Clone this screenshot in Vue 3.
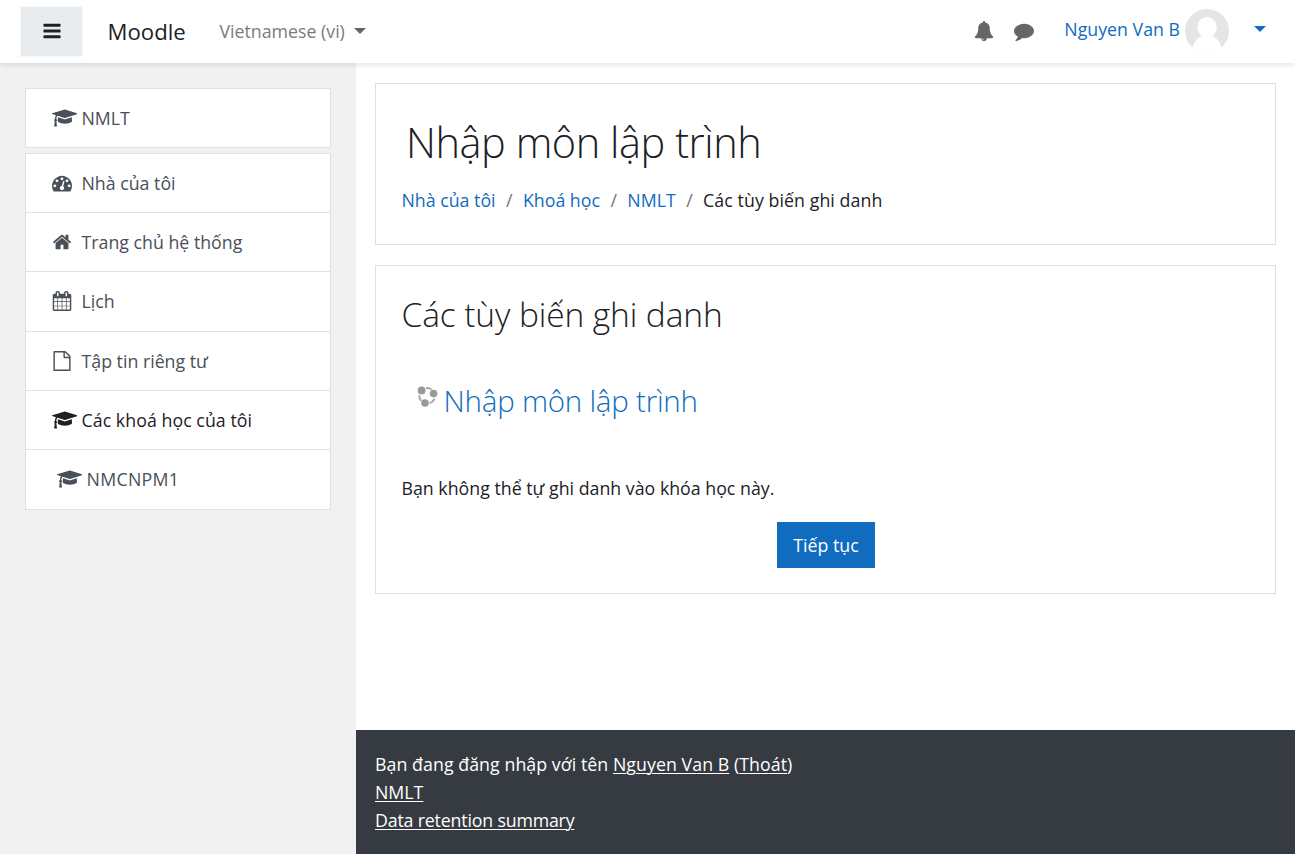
<script setup>
const icons = {
  cap: { w: 2304, d: 'M1774 836l18 316q4 69-82 128t-235 93.5-323 34.5-323-34.5-235-93.5-82-128l18-316 574 181q22 7 48 7t48-7zm530-324q0 23-22 31l-1120 352q-4 1-10 1t-10-1l-652-206q-43 34-71 111.5t-34 178.5q63 36 63 109 0 69-58 107l58 433q2 14-8 25-9 11-24 11h-192q-15 0-24-11-10-11-8-25l58-433q-58-38-58-107 0-73 65-111 11-207 98-330l-333-104q-22-8-22-31t22-31l1120-352q4-1 10-1t10 1l1120 352q22 8 22 31z' },
  dash: { w: 1792, d: 'M384 1152q0-53-37.5-90.5t-90.5-37.5-90.5 37.5-37.5 90.5 37.5 90.5 90.5 37.5 90.5-37.5 37.5-90.5zm192-448q0-53-37.5-90.5t-90.5-37.5-90.5 37.5-37.5 90.5 37.5 90.5 90.5 37.5 90.5-37.5 37.5-90.5zm428 481l101-382q6-26-7.5-48.5t-38.5-29.5-48 6.5-30 39.5l-101 382q-60 5-107 43.5t-63 98.5q-20 77 20 146t117 89 146-20 89-117q16-60-6-117t-72-91zm660-33q0-53-37.5-90.5t-90.5-37.5-90.5 37.5-37.5 90.5 37.5 90.5 90.5 37.5 90.5-37.5 37.5-90.5zm-640-640q0-53-37.5-90.5t-90.5-37.5-90.5 37.5-37.5 90.5 37.5 90.5 90.5 37.5 90.5-37.5 37.5-90.5zm448 192q0-53-37.5-90.5t-90.5-37.5-90.5 37.5-37.5 90.5 37.5 90.5 90.5 37.5 90.5-37.5 37.5-90.5zm320 448q0 261-141 483-19 29-54 29h-1402q-35 0-54-29-141-221-141-483 0-182 71-348t191-286 286-191 348-71 348 71 286 191 191 286 71 348z' },
  home: { w: 1792, d: 'M1472 992v480q0 26-19 45t-45 19h-384v-384h-256v384h-384q-26 0-45-19t-19-45v-480q0-1 .5-3t.5-3l575-474 575 474q1 2 1 6zm223-69l-62 74q-8 9-21 11h-3q-13 0-21-7l-692-577-692 577q-12 8-24 7-13-2-21-11l-62-74q-8-10-7-23.5t11-21.5l719-599q32-26 76-26t76 26l244 204v-195q0-14 9-23t23-9h192q14 0 23 9t9 23v408l219 182q10 8 11 21.5t-7 23.5z' },
  cal: { w: 1792, d: 'M192 1664h288v-288h-288v288zm352 0h320v-288h-320v288zm-352-352h288v-320h-288v320zm352 0h320v-320h-320v320zm-352-384h288v-288h-288v288zm736 736h320v-288h-320v288zm-384-736h320v-288h-320v288zm768 736h288v-288h-288v288zm-384-352h320v-320h-320v320zm-352-864v-288q0-13-9.5-22.5t-22.5-9.5h-64q-13 0-22.5 9.5t-9.5 22.5v288q0 13 9.5 22.5t22.5 9.5h64q13 0 22.5-9.5t9.5-22.5zm736 864h288v-320h-288v320zm-384-384h320v-288h-320v288zm384 0h288v-288h-288v288zm32-480v-288q0-13-9.5-22.5t-22.5-9.5h-64q-13 0-22.5 9.5t-9.5 22.5v288q0 13 9.5 22.5t22.5 9.5h64q13 0 22.5-9.5t9.5-22.5zm384-64v1280q0 52-38 90t-90 38h-1408q-52 0-90-38t-38-90v-1280q0-52 38-90t90-38h128v-96q0-66 47-113t113-47h64q66 0 113 47t47 113v96h384v-96q0-66 47-113t113-47h64q66 0 113 47t47 113v96h128q52 0 90 38t38 90z' },
  file: { w: 1792, d: 'M1596 380q28 28 48 76t20 88v1152q0 40-28 68t-68 28h-1344q-40 0-68-28t-28-68v-1600q0-40 28-68t68-28h896q40 0 88 20t76 48zm-444-244v376h376q-10-29-22-41l-313-313q-12-12-41-22zm384 1528v-1024h-416q-40 0-68-28t-28-68v-416h-768v1536h1280z' }
}
const nav = [
  { icon: 'dash', text: 'Nhà của tôi' },
  { icon: 'home', text: 'Trang chủ hệ thống' },
  { icon: 'cal', text: 'Lịch' },
  { icon: 'file', text: 'Tập tin riêng tư' },
  { icon: 'cap', text: 'Các khoá học của tôi', active: true },
  { icon: 'cap', text: 'NMCNPM1', child: true }
]
const crumbs = ['Nhà của tôi', 'Khoá học', 'NMLT']
</script>

<template>
  <div class="page">
    <header class="navbar">
      <button class="toggle" aria-label="Menu">
        <svg width="20" height="20" viewBox="0 0 1792 1792"><path d="M1664 1344v128q0 26-19 45t-45 19h-1408q-26 0-45-19t-19-45v-128q0-26 19-45t45-19h1408q26 0 45 19t19 45zm0-512v128q0 26-19 45t-45 19h-1408q-26 0-45-19t-19-45v-128q0-26 19-45t45-19h1408q26 0 45 19t19 45zm0-512v128q0 26-19 45t-45 19h-1408q-26 0-45-19t-19-45v-128q0-26 19-45t45-19h1408q26 0 45 19t19 45z" /></svg>
      </button>
      <span class="brand">Moodle</span>
      <span class="lang">Vietnamese (vi)<i class="caret"></i></span>
      <svg class="bell" width="20" height="20" viewBox="0 0 1792 1792"><path d="M912 1696q0-16-16-16-59 0-101.500-42.500t-42.500-101.500q0-16-16-16t-16 16q0 73 51.500 124.500t124.500 51.500q16 0 16-16zm816-288q0 52-38 90t-90 38h-448q0 106-75 181t-181 75-181-75-75-181h-448q-52 0-90-38t-38-90q50-42 91-88t85-119.500 74.500-158.500 50-206 19.500-260q0-152 117-282.500t307-158.500q-8-19-8-39 0-40 28-68t68-28 68 28 28 68q0 20-8 39 190 28 307 158.500t117 282.500q0 139 19.500 260t50 206 74.500 158.500 85 119.500 91 88z" /></svg>
      <svg class="chat" width="20" height="20" viewBox="0 0 1792 1792"><path d="M1792 896q0 174-120 321.500t-326 233-450 85.500q-70 0-145-8-198 175-460 242-49 14-114 22-17 2-30.500-9t-17.500-29v-1q-3-4-.5-12t2-10 4.500-9.500l6-9 7-8.500 8-9q7-8 31-34.500t34.500-38 31-39.500 32.500-51 27-59 26-76q-157-89-247.500-220t-90.500-281q0-130 71-248.500t191-204.500 286-136.500 348-50.500q244 0 450 85.500t326 233 120 321.500z" /></svg>
      <a class="user">Nguyen Van B</a>
      <svg class="avatar" width="44" height="44" viewBox="0 0 44 44">
        <defs><clipPath id="round"><circle cx="22" cy="22" r="22" /></clipPath></defs>
        <g clip-path="url(#round)">
          <rect width="44" height="44" fill="#e5e5e5" />
          <ellipse cx="22" cy="18.300" rx="9.800" ry="10.300" fill="#fff" />
          <path d="M6 44C7.500 35 11 29 18 26.500H26C33 29 36.500 35 38 44Z" fill="#fff" />
        </g>
      </svg>
      <i class="caret blue"></i>
    </header>

    <div class="body">
      <aside class="drawer">
        <nav class="list single">
          <a class="item"><span class="slot"><svg :viewBox="`0 0 ${icons.cap.w} 1792`"><path :d="icons.cap.d" /></svg></span>NMLT</a>
        </nav>
        <nav class="list multi">
          <a v-for="n in nav" :key="n.text" class="item" :class="{ active: n.active, child: n.child }">
            <span class="slot"><svg :viewBox="`0 0 ${icons[n.icon].w} 1792`"><path :d="icons[n.icon].d" /></svg></span>{{ n.text }}
          </a>
        </nav>
      </aside>

      <div class="content">
        <main>
          <section class="card head">
            <h1>Nhập môn lập trình</h1>
            <div class="crumbs">
              <template v-for="c in crumbs" :key="c"><a>{{ c }}</a><span class="sep">/</span></template>
              <span class="current">Các tùy biến ghi danh</span>
            </div>
          </section>
          <section class="card enrol">
            <h2>Các tùy biến ghi danh</h2>
            <h3>
              <svg width="21" height="21" viewBox="0 0 21 21">
                <g fill="none" stroke="#a6a6a6" stroke-width="2">
                  <path d="M9 2.100Q12.200 1.800 14.600 3.500" fill="none" />
                  <path d="M2.200 9.300Q2.200 12.600 4.200 14.900" fill="none" />
                  <path d="M12.700 17.300Q16.200 16.200 17.500 12.900" fill="none" />
                </g>
                <g fill="#999"><circle cx="4.600" cy="4.400" r="3.900" /><circle cx="16.600" cy="7.600" r="3.800" /><circle cx="8" cy="17" r="3.800" /></g>
              </svg>
              <a>Nhập môn lập trình</a>
            </h3>
            <p>Bạn không thể tự ghi danh vào khóa học này.</p>
            <button class="go">Tiếp tục</button>
          </section>
        </main>
        <footer>
          <div class="login">Bạn đang đăng nhập với tên <a>Nguyen Van B</a> (<a>Thoát</a>)</div>
          <div><a>NMLT</a></div>
          <div class="summary"><a>Data retention summary</a></div>
        </footer>
      </div>
    </div>
  </div>
</template>

<style>
body { overflow: hidden; }
</style>

<style scoped>
* { box-sizing: border-box; }
.page { height: 854px; display: flex; flex-direction: column; background: #fff; color: #1d2125; font: 17.75px/28px "Open Sans", "Noto Sans", sans-serif; }
svg { display: block; flex: none; }
button { border: 0; padding: 0; font: inherit; }
a { color: #0f6cbf; }
.navbar { position: relative; z-index: 1; height: 63px; flex: none; display: flex; align-items: center; padding: 0 29px 2px 21px; background: #fff; box-shadow: 0 2px 5px rgba(0, 0, 0, .1); }
.toggle { width: 61px; height: 49px; margin-top: 2px; background: #e9ecef; display: flex; align-items: center; justify-content: center; color: #1d2125; box-shadow: 0 0 0 1px #f6f7f8; }
.toggle svg { margin-top: -2px; }
svg path:not([fill]) { fill: currentColor; }
.brand { margin: 2px 0 0 25.500px; font-size: 22.2px; width: 112px; }
.lang { color: #7b7b7b; display: flex; align-items: center; }
.caret { border: 6px solid transparent; border-top-color: #666; border-bottom: 0; margin-left: 9.500px; }
.bell, .chat { color: #666; }
.bell { margin-left: auto; }
.chat { margin-left: 20px; }
.user { margin: -3px 5px 0 30px; }
.avatar { margin-top: 1px; }
.caret.blue { border-top-color: #0f6cbf; margin: -4px 0 0 25px; }
.body { flex: 1; display: flex; min-height: 0; }
.drawer { width: 356px; background: #f1f1f1; padding: 25px 25px 0; }
.list { display: flex; flex-direction: column; border: 1px solid #dee0e1; background: #fff; }
.single { height: 60px; margin-bottom: 5px; }
.multi { height: 357px; }
.item { height: 59.200px; display: flex; align-items: center; padding-left: 25.500px; color: #495057; }
.item:first-child { height: 58.200px; }
.item + .item { border-top: 1px solid #dee0e1; }
.item.active { color: #1d2125; letter-spacing: .05px; }
.item.child { padding-left: 30.500px; letter-spacing: .3px; }
.slot { width: 20px; margin-right: 10px; display: flex; }
.slot svg { height: 20px; width: auto; }
.content { flex: 1; display: flex; flex-direction: column; }
main { flex: 1; padding: 20px 19px 0; }
.card { border: 1px solid #dee0e1; padding-left: 25.500px; }
.head { height: 162px; margin-bottom: 20px; padding-top: 32px; }
h1, h2, h3, p { margin: 0; }
h1, h2, h3 { font-weight: 300; }
h1 { font-size: 41.500px; line-height: 52px; padding-left: 4.500px; letter-spacing: -.45px; }
.crumbs { display: flex; margin-top: 18px; }
.current { letter-spacing: .07px; }
.sep { color: #6c757d; width: 27.400px; text-align: center; }
.enrol { height: 329px; display: flex; flex-direction: column; padding: 26px 0 0 25.500px; }
h2 { font-size: 33.500px; line-height: 44px; letter-spacing: -.1px; }
h3 { display: flex; align-items: flex-start; font-size: 29.500px; line-height: 40px; margin-top: 45px; padding-left: 15px; letter-spacing: -.23px; }
h3 svg { margin: 5px 6px 0 0; }
.enrol p { margin-top: 53px; letter-spacing: .01px; }
.go { width: 98px; height: 46px; background: #0f6cbf; color: #fff; margin: 20px auto 0 375.500px; }
footer { height: 124px; color: #fff; padding: 20px 19px; background: #363a41; }
footer a { color: #fff; text-decoration: underline; text-underline-offset: 2px; text-decoration-thickness: 1px; }
.login { letter-spacing: .06px; }
.summary { letter-spacing: -.17px; }
</style>
